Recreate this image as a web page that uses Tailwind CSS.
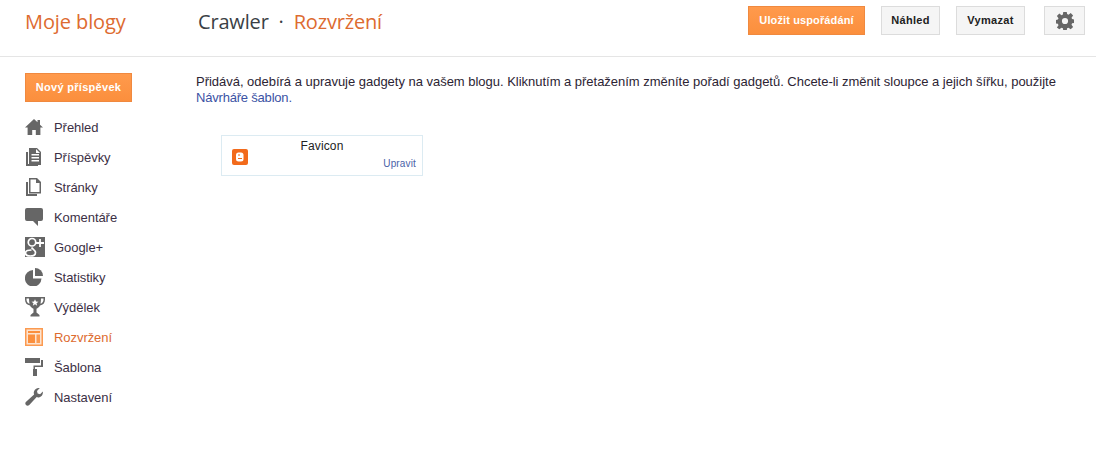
<!DOCTYPE html>
<html lang="cs">
<head>
  <meta charset="UTF-8">
  <meta name="viewport" content="width=device-width, initial-scale=1.0">
  <title>Rozvržení</title>
  <script src="https://cdn.jsdelivr.net/npm/@tailwindcss/browser@4"></script>
</head>
<body class="bg-white text-[#222] font-['Liberation_Sans',Arial,sans-serif] text-[13px]">
  <header class="flex h-[57px] border-b border-[#e5e5e5] pl-[25px] pr-[11px]">
    <a class="w-[173px] pt-[8px] font-['Open_Sans',sans-serif] text-xl leading-[28px] tracking-[-0.1px] text-[#dd6b30]">Moje blogy</a>
    <div class="flex pt-[8px] font-['Open_Sans',sans-serif] text-xl leading-[28px] tracking-[-0.17px]">
      <span class="text-[#3a3f45]">Crawler</span>
      <span class="w-[25px] text-center text-[#3a3f45]">·</span>
      <span class="text-[#dd6b30]">Rozvržení</span>
    </div>
    <div class="ml-auto flex items-start pt-[6px] font-bold text-[11px]">
      <button class="h-[29px] w-[117px] border border-[#f0893f] bg-gradient-to-b from-[#ff9a4c] to-[#fb8f3d] tracking-[0.12px] text-white">Uložit uspořádání</button>
      <button class="ml-[16px] h-[29px] w-[59px] border border-[#dcdcdc] bg-[#f5f5f5] tracking-[0.3px] text-[#222]">Náhled</button>
      <button class="ml-[16px] h-[29px] w-[69px] border border-[#dcdcdc] bg-[#f5f5f5] tracking-[0.3px] text-[#222]">Vymazat</button>
      <button class="ml-[19px] flex h-[29px] w-[41px] items-center justify-center border border-[#dcdcdc] bg-[#f5f5f5]">
        <svg width="18" height="18" viewBox="0 0 18 18" fill="#666"><path fill-rule="evenodd" d="M7.3 0h3.4l.4 2.6 1.4.6L14.7 1.6l2.4 2.4-1.600 2.200.6 1.400 2.600.4v3.400l-2.600.4-.6 1.400 1.600 2.200-2.400 2.400-2.200-1.600-1.400.6-.4 2.600H7.300l-.4-2.600-1.400-.6-2.200 1.600L.9 15.900l1.600-2.200-.6-1.400L-.7 11.900V8.500l2.600-.4.6-1.400L.9 4.500 3.300 2.100l2.200 1.600 1.400-.6z M9 6.400a3.100 3.100 0 1 0 0 6.200 3.100 3.100 0 0 0 0-6.200z" transform="translate(0 -.5)"/></svg>
      </button>
    </div>
  </header>

  <div class="flex">
    <aside class="w-[196px] shrink-0 pl-[25px] pt-[16px]">
      <button class="h-[29px] w-[107px] border border-[#f0893f] bg-gradient-to-b from-[#ff9a4c] to-[#fb8f3d] text-[11px] font-bold tracking-[0.3px] text-white">Nový příspěvek</button>
      <nav class="mt-[10px] tracking-[-0.06px] text-[#3c3045]">
        <a class="flex h-[30px] items-center">
          <svg class="mr-[11px] w-[18px] shrink-0" height="18" viewBox="0 0 18 18" fill="#666"><path d="M9 1 0 9.500h2.600V17h4.600v-5h3.600v5h4.600V9.500H18L15 6.700V2h-2.500v2.300z"/></svg>
          <span class="mt-[2px]">Přehled</span></a>
        <a class="flex h-[30px] items-center">
          <svg class="mr-[11px] w-[18px] shrink-0" height="18" viewBox="0 0 18 18" fill="#666"><path d="M1 4h2v12h10v2H1z"/><path fill-rule="evenodd" d="M4 0h8l4 4v13H4zM6.500 6v1.500H14V6zm0 3v1.500H14V9zm0 3v1.500H14V12zM11 1v4h4z"/></svg>
          <span class="mt-[2px]">Příspěvky</span></a>
        <a class="flex h-[30px] items-center">
          <svg class="mr-[11px] w-[18px] shrink-0" height="18" viewBox="0 0 18 18" fill="#666"><path d="M1 4h2v12h9v2H1z"/><path fill-rule="evenodd" d="M4 0h8l4 4v11.500H4zm1.500 1.500v12.500h9V5H11V1.500z"/></svg>
          <span class="mt-[2px]">Stránky</span></a>
        <a class="flex h-[30px] items-center">
          <svg class="mr-[11px] w-[18px] shrink-0" height="18" viewBox="0 0 18 18" fill="#666"><path d="M2 0h14a2 2 0 0 1 2 2v9a2 2 0 0 1-2 2h-3v5l-5-5H2a2 2 0 0 1-2-2V2a2 2 0 0 1 2-2z"/></svg>
          <span class="mt-[2px]">Komentáře</span></a>
        <a class="flex h-[30px] items-center">
          <svg class="mr-[9px] w-[20px] shrink-0" height="20" viewBox="0 0 20 20"><rect width="20" height="20" fill="#666"/><path d="M15 2v8M11 6h8" stroke="#fff" stroke-width="1.800" fill="none"/><path d="M7 1.500a3.200 3.200 0 1 0 0 7.500 3.200 3.200 0 1 0 0-7.500zM6.500 10.500c1 1.500 4 3 4 5s-2 3.500-5 3.500-5-1-5-3 3-3 6-3" stroke="#fff" stroke-width="1.700" fill="none"/></svg>
          <span class="mt-[2px]">Google+</span></a>
        <a class="flex h-[30px] items-center">
          <svg class="mr-[11px] w-[18px] shrink-0" height="18" viewBox="0 0 18 18" fill="#666"><path d="M8 2v8.500h8.500A8.300 8.300 0 1 1 8 2z"/><path d="M10 0a8 8 0 0 1 8 8h-8z"/></svg>
          <span class="mt-[2px]">Statistiky</span></a>
        <a class="flex h-[30px] items-center">
          <svg class="mr-[9px] w-[20px] shrink-0" height="20" viewBox="0 0 20 20" fill="#666"><path fill-rule="evenodd" d="M0 0h20v2.500c0 3.500-2 5.500-5 6-.8 1.800-2.300 2.800-3.500 3.200V15.500l3 2.500v1.500h-9V18l3-2.500V11.700C7.300 11.300 5.800 10.300 5 8.500c-3-.5-5-2.500-5-6zM1.500 1.500v1c0 2.300 1.200 3.800 3 4.300-.3-1.500-.5-3.500-.5-5.300zM18.500 1.500H16c0 1.800-.2 3.800-.5 5.300 1.800-.5 3-2 3-4.300zM10 2.200 9 4.600l-2.500.1 2 1.500L7.800 8.700 10 7.300l2.200 1.400-.7-2.500 2-1.500-2.500-.1z"/></svg>
          <span class="mt-[2px]">Výdělek</span></a>
        <a class="flex h-[30px] items-center text-[#dd6b30]">
          <svg class="mr-[11px] w-[18px] shrink-0" height="18" viewBox="0 0 18 18"><rect x=".75" y=".75" width="16.500" height="16.500" fill="#fde3cf" stroke="#fb9a50" stroke-width="1.500"/><rect x="3" y="3" width="12" height="2" fill="#fb8f3d"/><rect x="3" y="6.500" width="7" height="8.500" fill="#fb8f3d"/><rect x="11.500" y="6.500" width="3.500" height="8.500" fill="#fb9a50"/></svg>
          <span class="mt-[2px]">Rozvržení</span></a>
        <a class="flex h-[30px] items-center">
          <svg class="mr-[11px] w-[18px] shrink-0" height="18" viewBox="0 0 18 18" fill="#666"><path d="M0 0h15v5H0z"/><path d="M16 2h2v7H10v2h2v7H8v-7h.5V7.500H16z"/></svg>
          <span class="mt-[2px]">Šablona</span></a>
        <a class="flex h-[30px] items-center">
          <svg class="mr-[11px] w-[18px] shrink-0" height="18" viewBox="0 0 18 18" fill="#666"><path d="M17.800 3.500c.5 2.500-.8 5-3.300 5.700-1 .3-2 .2-2.800-.1L4.300 17c-1 1-2.500 1-3.300.1-1-1-.9-2.500.1-3.400l8-7.300c-.4-1-.5-2-.1-3C9.800 1 12.300-.4 14.800.1L12 3l.6 2.500 2.500.7z"/></svg>
          <span class="mt-[2px]">Nastavení</span></a>
      </nav>
    </aside>

    <main class="flex-1 pt-[17px] pr-[30px]">
      <p class="leading-[16px] tracking-[-0.02px] text-[#2c2433]">Přidává, odebírá a upravuje gadgety na vašem blogu. Kliknutím a přetažením změníte pořadí gadgetů. Chcete-li změnit sloupce a jejich šířku, použijte <a class="tracking-[-0.2px] text-[#3b52a4]">Návrháře šablon.</a></p>
      <div class="relative ml-[25px] mt-[29px] h-[41px] w-[202px] border border-[#dcebf2] bg-white">
        <div class="pt-[3px] text-center text-xs leading-[15px] tracking-[0.15px] text-[#222]">Favicon</div>
        <svg class="absolute left-[10px] top-[13px]" width="16" height="16" viewBox="0 0 16 16"><rect width="16" height="16" rx="2" fill="#f26a1b"/><rect x="4" y="3.500" width="7.500" height="9" rx="2.500" fill="#fff"/><path d="M6 6h2M6 9.500h4" stroke="#f26a1b" stroke-width="1.200"/></svg>
        <a class="absolute right-[6px] bottom-[5px] text-[10px] leading-[12px] tracking-[0.15px] text-[#4a62a8]">Upravit</a>
      </div>
    </main>
  </div>
</body>
</html>
